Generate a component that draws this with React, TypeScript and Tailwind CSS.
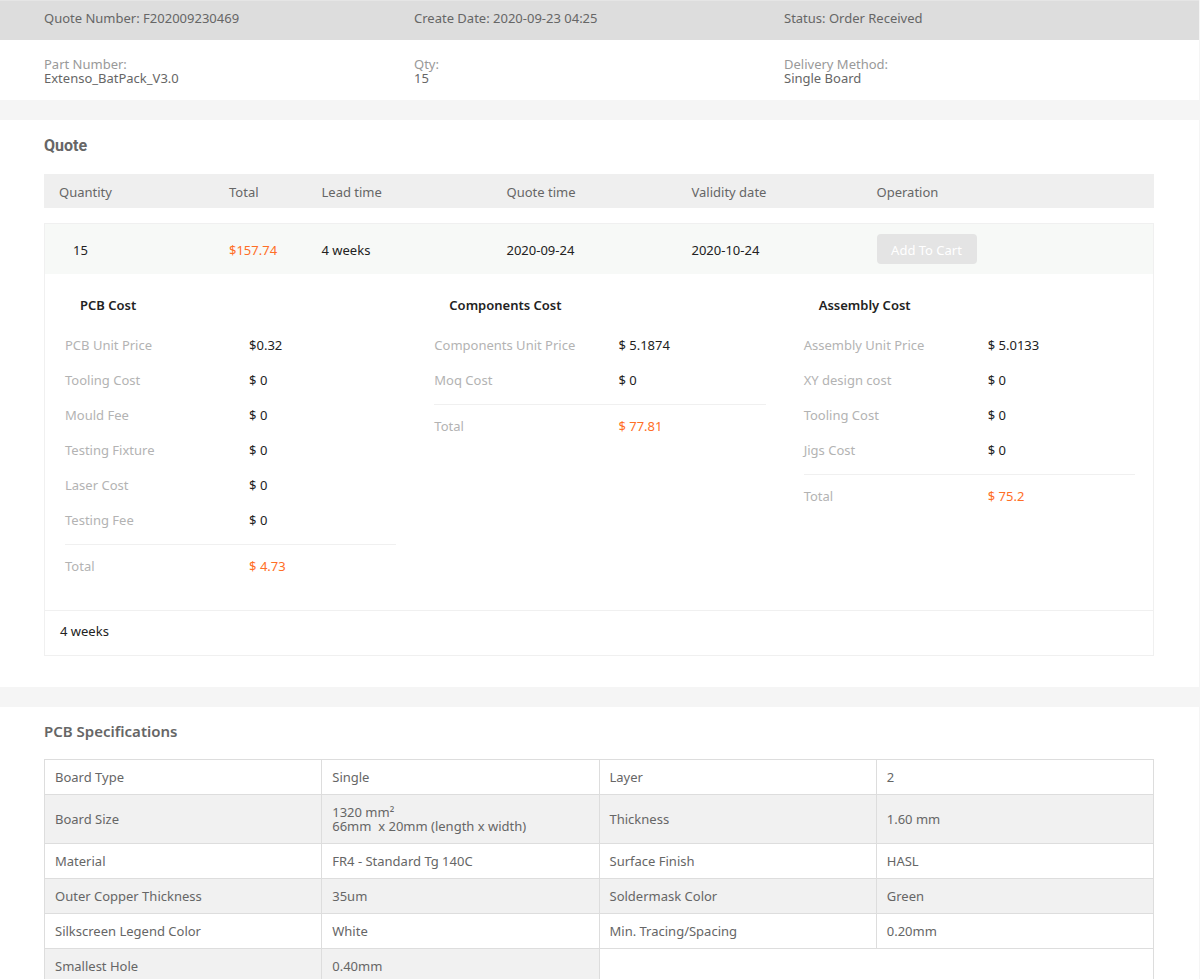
import type { ReactNode } from "react";

type Line = [label: string, value: string];

const costs: { title: string; lines: Line[]; total: string }[] = [
  {
    title: "PCB Cost",
    lines: [
      ["PCB Unit Price", "$0.32"],
      ["Tooling Cost", "$ 0"],
      ["Mould Fee", "$ 0"],
      ["Testing Fixture", "$ 0"],
      ["Laser Cost", "$ 0"],
      ["Testing Fee", "$ 0"],
    ],
    total: "$ 4.73",
  },
  {
    title: "Components Cost",
    lines: [
      ["Components Unit Price", "$ 5.1874"],
      ["Moq Cost", "$ 0"],
    ],
    total: "$ 77.81",
  },
  {
    title: "Assembly Cost",
    lines: [
      ["Assembly Unit Price", "$ 5.0133"],
      ["XY design cost", "$ 0"],
      ["Tooling Cost", "$ 0"],
      ["Jigs Cost", "$ 0"],
    ],
    total: "$ 75.2",
  },
];

const specs: [string, ReactNode, string?, ReactNode?][] = [
  ["Board Type", "Single", "Layer", "2"],
  [
    "Board Size",
    <>
      1320 mm²
      <br />
      66mm&nbsp; x 20mm (length x width)
    </>,
    "Thickness",
    "1.60 mm",
  ],
  ["Material", "FR4 - Standard Tg 140C", "Surface Finish", "HASL"],
  ["Outer Copper Thickness", "35um", "Soldermask Color", "Green"],
  ["Silkscreen Legend Color", "White", "Min. Tracing/Spacing", "0.20mm"],
  ["Smallest Hole", "0.40mm"],
];

function CostColumn({ title, lines, total }: (typeof costs)[number]) {
  return (
    <section className="pr-[18px] pl-5">
      <h3 className="mb-[26px] pl-[15px] font-semibold text-[#222]">{title}</h3>
      <dl className="flex flex-col gap-[21px]">
        {lines.map(([label, value]) => (
          <div key={label} className="grid grid-cols-[5fr_4fr]">
            <dt className="text-[#b3b3b3]">{label}</dt>
            <dd>{value}</dd>
          </div>
        ))}
      </dl>
      <dl className="mt-[17px] grid grid-cols-[5fr_4fr] border-t border-[#f0f0f0] pt-[14px]">
        <dt className="text-[#b3b3b3]">Total</dt>
        <dd className="text-[#ff6e26]">{total}</dd>
      </dl>
    </section>
  );
}

function Fact({ label, value }: { label: string; value: string }) {
  return (
    <div>
      <dt className="text-[#999]">{label}</dt>
      <dd>{value}</dd>
    </div>
  );
}

export default function App() {
  const specCell = "border border-[#ddd] p-[10px] text-left font-normal";
  return (
    <div className="bg-[#f5f5f5] pr-px font-['Noto_Sans','Open_Sans',sans-serif] text-[13px] leading-[14px] text-[#666]">
      <header className="bg-white">
        <div className="grid grid-cols-3 border-t border-[#e5e5e5] bg-[#ddd] pt-[10px] pr-[45px] pb-[15px] pl-11">
          <p>Quote Number: F202009230469</p>
          <p>Create Date: 2020-09-23 04:25</p>
          <p>Status: Order Received</p>
        </div>
        <dl className="grid grid-cols-3 pt-[17px] pr-[45px] pb-[15px] pl-11">
          <Fact label="Part Number:" value="Extenso_BatPack_V3.0" />
          <Fact label="Qty:" value="15" />
          <Fact label="Delivery Method:" value="Single Board" />
        </dl>
      </header>

      <main className="mt-5 flex flex-col gap-5">
        <section className="bg-white pt-4 pr-[45px] pb-[31px] pl-11">
          <h2 className="mb-[18px] font-[Roboto,sans-serif] text-base leading-5 font-bold">Quote</h2>
          <table className="w-full table-fixed border-separate border-spacing-0 text-[#222]">
            <thead>
              <tr className="h-[34px] bg-[#efefef] text-left text-[#666]">
                <th className="w-2/12 p-0 pt-0.5 pl-[15px] font-normal">Quantity</th>
                <th className="w-1/12 p-0 pt-0.5 font-normal">Total</th>
                <th className="w-2/12 p-0 pt-0.5 font-normal">Lead time</th>
                <th className="w-2/12 p-0 pt-0.5 font-normal">Quote time</th>
                <th className="w-2/12 p-0 pt-0.5 font-normal">Validity date</th>
                <th className="w-3/12 p-0 pt-0.5 font-normal">Operation</th>
              </tr>
            </thead>
            <tbody>
              <tr aria-hidden="true">
                <td colSpan={6} className="h-[15px] p-0" />
              </tr>
              <tr className="h-[51px] bg-[#f7f9f7]">
                <td className="border-t border-l border-[#f0f0f0] p-0 pt-0.5 pl-7">15</td>
                <td className="border-t border-[#f0f0f0] p-0 pt-0.5 text-[#ff6e26]">$157.74</td>
                <td className="border-t border-[#f0f0f0] p-0 pt-0.5">4 weeks</td>
                <td className="border-t border-[#f0f0f0] p-0 pt-0.5">2020-09-24</td>
                <td className="border-t border-[#f0f0f0] p-0 pt-0.5">2020-10-24</td>
                <td className="border-t border-r border-[#f0f0f0] p-0">
                  <button
                    type="button"
                    className="block h-[30px] w-[100px] rounded-[4px] bg-[#e4e4e4] pt-0.5 text-white"
                  >
                    Add To Cart
                  </button>
                </td>
              </tr>
              <tr>
                <td colSpan={6} className="border-x border-[#f0f0f0] p-0 pt-6 pb-[37px]">
                  <div className="grid grid-cols-3">
                    {costs.map((cost) => (
                      <CostColumn key={cost.title} {...cost} />
                    ))}
                  </div>
                </td>
              </tr>
              <tr>
                <td colSpan={6} className="border border-[#f0f0f0] p-0 pt-[13px] pb-[17px] pl-[15px]">
                  4 weeks
                </td>
              </tr>
            </tbody>
          </table>
        </section>

        <section className="bg-white pt-[14px] pr-[45px] pb-[31px] pl-11">
          <h2 className="mb-[18px] text-[15px] leading-5 font-semibold">PCB Specifications</h2>
          <table className="w-full table-fixed border-collapse">
            <tbody>
              {specs.map(([label, value, label2, value2]) => (
                <tr key={label} className="even:bg-[#f1f1f1]">
                  <th scope="row" className={specCell}>{label}</th>
                  <td className={specCell}>{value}</td>
                  {label2 ? (
                    <>
                      <th scope="row" className={specCell}>{label2}</th>
                      <td className={specCell}>{value2}</td>
                    </>
                  ) : (
                    <td colSpan={2} className="border border-[#ddd] bg-white" />
                  )}
                </tr>
              ))}
            </tbody>
          </table>
        </section>
      </main>
    </div>
  );
}
